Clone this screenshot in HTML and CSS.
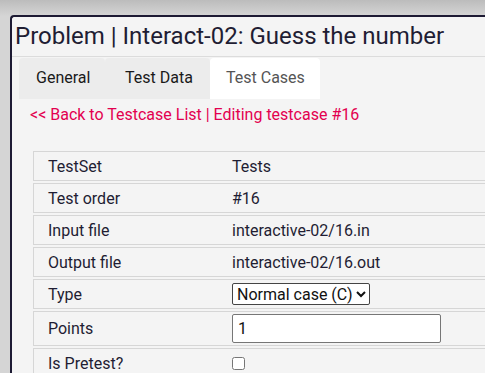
FILE: index.html
```html
<!DOCTYPE html>
<html lang="en">
<head>
    <meta charset="UTF-8">
    <meta name="viewport" content="width=device-width, initial-scale=1.0">
    <title>Problem | Interact-02</title>
    <link rel="stylesheet" href="styles.css">
</head>
<body>
    <div class="window">
        <h1 class="title">Problem | Interact-02: Guess the number</h1>
        <div class="tabs">
            <div class="tab tab-general">General</div>
            <div class="tab tab-data">Test Data</div>
            <div class="tab tab-cases active">Test Cases</div>
        </div>
        <div class="content">
            <a class="back-link" href="#">&lt;&lt; Back to Testcase List | Editing testcase #16</a>
            <table class="case-table">
                <tbody>
                    <tr>
                        <td>TestSet</td>
                        <td>Tests</td>
                    </tr>
                    <tr>
                        <td>Test order</td>
                        <td>#16</td>
                    </tr>
                    <tr>
                        <td>Input file</td>
                        <td>interactive-02/16.in</td>
                    </tr>
                    <tr>
                        <td>Output file</td>
                        <td>interactive-02/16.out</td>
                    </tr>
                    <tr class="row-select">
                        <td>Type</td>
                        <td>
                            <select class="type-select">
                                <option>Normal case (C)</option>
                                <option>Sample case (S)</option>
                            </select>
                        </td>
                    </tr>
                    <tr class="row-input">
                        <td>Points</td>
                        <td><input class="points-input" type="text" value="1"></td>
                    </tr>
                    <tr>
                        <td>Is Pretest?</td>
                        <td><input class="pretest-box" type="checkbox"></td>
                    </tr>
                </tbody>
            </table>
        </div>
    </div>
</body>
</html>
```

FILE: styles.css
```css
html, body {
    height: 100%;
}

body {
    margin: 0;
    padding: 15px 0 0 10px;
    box-sizing: border-box;
    overflow: hidden;
    background: linear-gradient(#bcbcbc, #d5d5d5 16px, #d5d5d5);
    font-family: Roboto, "Liberation Sans", sans-serif;
    color: #1f1d33;
}

.window {
    height: 100%;
    overflow: hidden;
    background-color: #f4f4f4;
    border-top: 2px solid #1d1a33;
    border-left: 2px solid #1d1a33;
    border-top-left-radius: 4px;
}

.title {
    margin: 0;
    padding: 4px 0 0 3px;
    height: 35px;
    font-size: 24px;
    font-weight: normal;
    line-height: 30px;
    white-space: nowrap;
    border-bottom: 1px solid #dcdcdc;
}

.tabs {
    display: flex;
    padding: 1px 0 0 7px;
    height: 41px;
}

.tab {
    box-sizing: border-box;
    padding: 10px 0 0 17px;
    font-size: 16px;
    line-height: 19px;
    color: #1a1a1a;
    background-color: #ececec;
    border-top-left-radius: 4px;
    border-top-right-radius: 4px;
}

.tab-general {
    width: 86px;
}

.tab-data {
    width: 105px;
    padding-left: 20px;
}

.tab-cases {
    width: 110px;
    padding-left: 16px;
}

.tab.active {
    background-color: #fff;
    color: #555;
}

.content {
    padding: 6px 0 0 18px;
}

.back-link {
    display: block;
    font-size: 16px;
    line-height: 19px;
    color: #e3004f;
    text-decoration: none;
}

.case-table {
    margin: 25px 0 0 3px;
    width: 600px;
    table-layout: fixed;
    border-collapse: separate;
    border-spacing: 0 2px;
    font-size: 16px;
    color: #1f1d33;
}

.case-table td {
    height: 28px;
    padding: 0;
    border-top: 1px solid #d6d6d6;
    border-bottom: 1px solid #d6d6d6;
    vertical-align: middle;
    line-height: 19px;
    white-space: nowrap;
}

.case-table td:first-child {
    width: 184px;
    padding-left: 14px;
    border-left: 1px solid #d6d6d6;
}

.type-select {
    font-family: Roboto, "Liberation Sans", sans-serif;
    font-size: 16px;
    height: 22px;
    padding: 0;
    color: #111;
    background-color: #fff;
    border: 1px solid #444;
    border-radius: 2px;
}

.row-input td {
    height: auto;
    padding-top: 2px;
    padding-bottom: 2px;
}

.points-input {
    display: block;
    box-sizing: border-box;
    width: 209px;
    height: 29px;
    margin: 0;
    padding: 0 5px;
    font-family: Roboto, "Liberation Sans", sans-serif;
    font-size: 16px;
    color: #111;
    border: 1px solid #767676;
    border-radius: 2px;
}

.pretest-box {
    display: block;
    margin: 0;
    width: 13px;
    height: 13px;
}
```
